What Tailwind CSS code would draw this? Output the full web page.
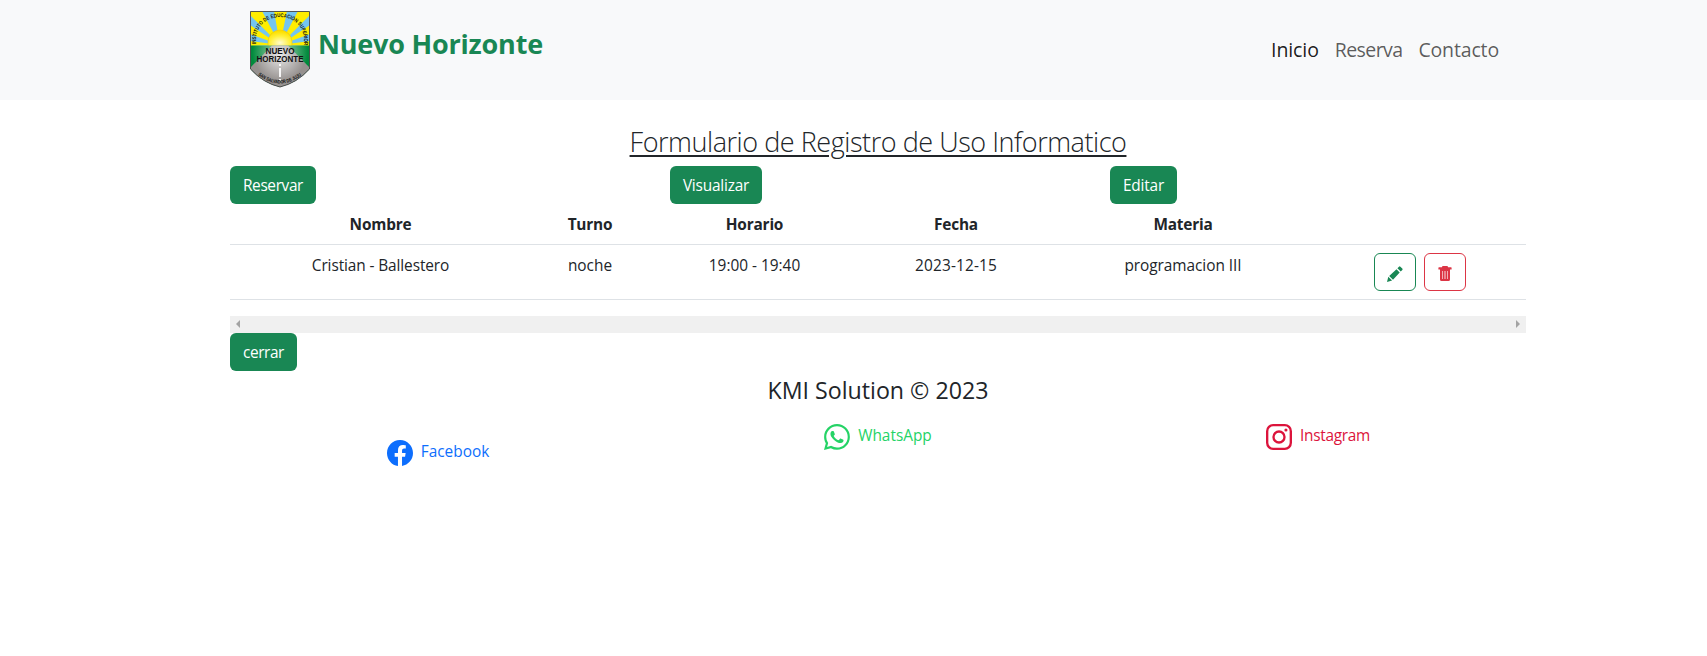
<!DOCTYPE html>
<html lang="es">
<head>
<meta charset="utf-8">
<title>Nuevo Horizonte</title>
<script src="https://cdn.jsdelivr.net/npm/@tailwindcss/browser@4"></script>
</head>
<body class="bg-white font-['Open_Sans',sans-serif] text-[15.4px] leading-6 text-[#212529]">
<header class="h-[100px] bg-[#f8f9fa]">
  <nav class="ml-[250px] flex h-full w-[1249px] items-center justify-between">
    <a class="flex items-start gap-2">
      <svg class="mt-[-2px] h-[77px] w-[60px]" viewBox="0 0 60 77">
        <defs>
          <clipPath id="shield"><path d="M.5.5H59.5V58Q47 72 30 76Q13 72 .5 58Z"/></clipPath>
          <radialGradient id="sun" cx=".5" cy=".8" r=".7"><stop offset="0" stop-color="#fffbd0"/><stop offset=".6" stop-color="#fff03a"/><stop offset="1" stop-color="#fde000"/></radialGradient>
          <radialGradient id="road" gradientUnits="userSpaceOnUse" cx="30" cy="44" r="26"><stop offset="0" stop-color="#e8e8e8"/><stop offset="1" stop-color="#96918f"/></radialGradient>
          <radialGradient id="grass" gradientUnits="userSpaceOnUse" cx="30" cy="42" r="28"><stop offset="0" stop-color="#b5d8bd"/><stop offset="1" stop-color="#008a3c"/></radialGradient>
          <path id="arcTop" d="M6 33V28A24 22 0 0 1 54 28V33"/>
          <path id="arcBottom" d="M8 64Q30 81 52 64"/>
        </defs>
        <g clip-path="url(#shield)">
          <rect width="60" height="36" fill="#74c5f0"/>
          <path fill="#ffee00" d="M30 34L24 0H37ZM30 34L12 0H0V4ZM30 34L48 0H60V4ZM30 34L0 14V23ZM30 34L60 14V23ZM30 34L0 30V35ZM30 34L60 30V35Z"/>
          <path d="M18 35V31a12 12 0 0 1 24 0V35Z" fill="url(#sun)" stroke="#f3c900" stroke-width=".6"/>
          <rect y="34.500" width="60" height="43" fill="url(#grass)"/>
          <path d="M22 34.500H38L60 57V77H0V57Z" fill="url(#road)"/>
          <path d="M30 53V55M30 57V66M30 68V70" stroke="#fff" stroke-width="1.800"/>
        </g>
        <path d="M.5.5H59.500V58Q47 72 30 76Q13 72 .5 58Z" fill="none" stroke="#444" stroke-width=".9"/>
        <g fill="#111" font-family="Liberation Sans, sans-serif" font-weight="700">
          <text font-size="5.400"><textPath href="#arcTop" textLength="83" lengthAdjust="spacingAndGlyphs">INSTITUTO DE EDUCACIÓN SUPERIOR</textPath></text>
          <text x="30" y="43" font-size="8.800" text-anchor="middle" textLength="29" lengthAdjust="spacingAndGlyphs">NUEVO</text>
          <text x="30" y="51" font-size="8.800" text-anchor="middle" textLength="47" lengthAdjust="spacingAndGlyphs">HORIZONTE</text>
          <text font-size="5"><textPath href="#arcBottom" textLength="50" lengthAdjust="spacingAndGlyphs">SAN SALVADOR DE JUJUY</textPath></text>
        </g>
      </svg>
      <span class="mt-[10px] text-[27px] leading-[42px] font-bold tracking-[-0.2px] text-[#198754]">Nuevo Horizonte</span>
    </a>
    <div class="flex gap-4 text-[19.5px] leading-[30px]">
      <a class="tracking-[-0.1px] text-black/90">Inicio</a>
      <a class="tracking-[-0.6px] text-black/65">Reserva</a>
      <a class="tracking-[-0.15px] text-black/65">Contacto</a>
    </div>
  </nav>
</header>

<main class="ml-[218px] w-[1320px] px-3 pt-[25px]">
  <h1 class="mb-[7px] text-center text-[27px] leading-[34px] font-light tracking-[-0.45px] underline decoration-2 underline-offset-[3px]">Formulario de Registro de Uso Informatico</h1>
  <div class="-mx-3 grid grid-cols-3">
    <div class="px-3"><button class="block h-[38px] w-[86px] rounded-md bg-[#198754] pt-0.5 tracking-[-0.36px] text-white">Reservar</button></div>
    <div class="px-3"><button class="block h-[38px] w-[92px] rounded-md bg-[#198754] pt-0.5 tracking-[-0.2px] text-white">Visualizar</button></div>
    <div class="px-3"><button class="block h-[38px] w-[67px] rounded-md bg-[#198754] pt-0.5 tracking-[-0.2px] text-white">Editar</button></div>
  </div>
  <table class="w-full table-fixed border-collapse text-center">
    <colgroup><col class="w-[301px]"><col class="w-[118px]"><col class="w-[211px]"><col class="w-[192px]"><col class="w-[262px]"><col class="w-[212px]"></colgroup>
    <thead>
      <tr class="h-10 border-b border-[#dee2e6] align-top font-bold tracking-[-0.2px]">
        <th class="px-2 pt-[9px]">Nombre</th><th class="px-2 pt-[9px]">Turno</th><th class="px-2 pt-[9px]">Horario</th><th class="px-2 pt-[9px]">Fecha</th><th class="px-2 pt-[9px]">Materia</th><th></th>
      </tr>
    </thead>
    <tbody>
      <tr class="h-[55px] border-b border-[#dee2e6] align-top">
        <td class="px-2 pt-[9px] tracking-[-0.1px]">Cristian - Ballestero</td><td class="px-2 pt-[9px]">noche</td><td class="px-2 pt-[9px]">19:00 - 19:40</td><td class="px-2 pt-[9px] tracking-[0.15px]">2023-12-15</td><td class="px-2 pt-[9px] tracking-[-0.05px]">programacion III</td>
        <td class="p-2">
          <div class="flex justify-center gap-2">
            <button class="flex h-[38px] w-[42px] items-center justify-center rounded-md border border-[#198754] text-[#198754]">
              <svg class="mt-1 size-4" viewBox="0 0 16 16" fill="currentColor"><path d="M0 16L1.300 10.800L5.100 14.600ZM2.200 9.900L9.500 3.200L12.700 6.500L6 13.800ZM10.400 2.300L12 .7Q12.700 0 13.400.7L15.300 2.600Q16 3.300 15.300 4L13.700 5.600Z"/></svg>
            </button>
            <button class="flex h-[38px] w-[42px] items-center justify-center rounded-md border border-[#dc3545] text-[#dc3545]">
              <svg class="mt-1 size-4" viewBox="0 0 16 16" fill="currentColor"><path d="M5.500 0h5l.6 1.200H14a.6.6 0 0 1 .6.600V3.400H1.400V1.800A.6.6 0 0 1 2 1.200h2.900Z"/><path fill-rule="evenodd" d="M3 3H13V13.500Q13 15 11.500 15H4.500Q3 15 3 13.500ZM5.300 5V13H5.900V5ZM7.600 5V13H8.400V5ZM10.100 5V13H10.700V5Z"/></svg>
            </button>
          </div>
        </td>
      </tr>
    </tbody>
  </table>
  <div class="mt-4 flex h-[17px] items-center justify-between bg-[#f0f0f0] px-1.5 text-[#a3a3a3]">
    <svg class="h-2 w-1" viewBox="0 0 4 8" fill="currentColor"><path d="M4 0V8L0 4Z"/></svg>
    <svg class="h-2 w-1" viewBox="0 0 4 8" fill="currentColor"><path d="M0 0V8L4 4Z"/></svg>
  </div>
  <button class="block h-[38px] w-[67px] rounded-md bg-[#198754] pt-0.5 tracking-[-0.4px] text-white">cerrar</button>
</main>

<footer class="ml-[218px] w-[1320px] pt-[5px]">
  <p class="text-center text-[23.2px] leading-[29px]">KMI Solution © 2023</p>
  <div class="mt-[19px] grid grid-cols-3 items-start leading-6">
    <a class="mt-4 flex justify-center gap-2 text-[#0d6efd]">
      <svg class="size-[26px]" viewBox="0 0 16 16" fill="currentColor"><path d="M16 8.049c0-4.446-3.582-8.050-8-8.050C3.580 0-.002 3.603-.002 8.050c0 4.017 2.926 7.347 6.750 7.951v-5.625h-2.030V8.050H6.750V6.275c0-2.017 1.195-3.131 3.022-3.131.876 0 1.791.157 1.791.157v1.980h-1.009c-.993 0-1.303.621-1.303 1.258v1.510h2.218l-.354 2.326H9.250V16c3.824-.604 6.750-3.934 6.750-7.951"/></svg>
      <span>Facebook</span>
    </a>
    <a class="flex justify-center gap-2 text-[#25d366]">
      <svg class="size-[26px]" viewBox="0 0 16 16" fill="currentColor"><path d="M13.601 2.326A7.850 7.850 0 0 0 7.994 0C3.627 0 .068 3.558.064 7.926c0 1.399.366 2.760 1.057 3.965L0 16l4.204-1.102a7.900 7.900 0 0 0 3.790.965h.004c4.368 0 7.926-3.558 7.930-7.930A7.900 7.900 0 0 0 13.600 2.326zM7.994 14.521a6.600 6.600 0 0 1-3.356-.920l-.240-.144-2.494.654.666-2.433-.156-.251a6.560 6.560 0 0 1-1.007-3.505c0-3.626 2.957-6.584 6.591-6.584a6.560 6.560 0 0 1 4.660 1.931 6.560 6.560 0 0 1 1.928 4.660c-.004 3.639-2.961 6.592-6.592 6.592m3.615-4.934c-.197-.099-1.170-.578-1.353-.646-.182-.065-.315-.099-.445.099-.133.197-.513.646-.627.775-.114.133-.232.148-.430.050-.197-.100-.836-.308-1.592-.985-.590-.525-.985-1.175-1.103-1.372-.114-.198-.011-.304.088-.403.087-.088.197-.232.296-.346.100-.114.133-.198.198-.330.065-.134.034-.248-.015-.347-.050-.099-.445-1.076-.612-1.470-.160-.389-.323-.335-.445-.340-.114-.007-.247-.007-.380-.007a.730.730 0 0 0-.529.247c-.182.198-.691.677-.691 1.654s.710 1.916.810 2.049c.098.133 1.394 2.132 3.383 2.992.470.205.840.326 1.129.418.475.152.904.129 1.246.080.380-.058 1.171-.480 1.338-.943.164-.464.164-.860.114-.943-.049-.084-.182-.133-.380-.232"/></svg>
      <span>WhatsApp</span>
    </a>
    <a class="flex justify-center gap-2 text-[#dc143c]">
      <svg class="size-[26px]" viewBox="0 0 16 16" fill="none" stroke="currentColor" stroke-width="1.440"><rect x=".72" y=".72" width="14.560" height="14.560" rx="3.700"/><circle cx="8" cy="8" r="3.390"/><circle cx="12.270" cy="3.730" r=".96" fill="currentColor" stroke="none"/></svg>
      <span class="tracking-[-0.3px]">Instagram</span>
    </a>
  </div>
</footer>
</body>
</html>
